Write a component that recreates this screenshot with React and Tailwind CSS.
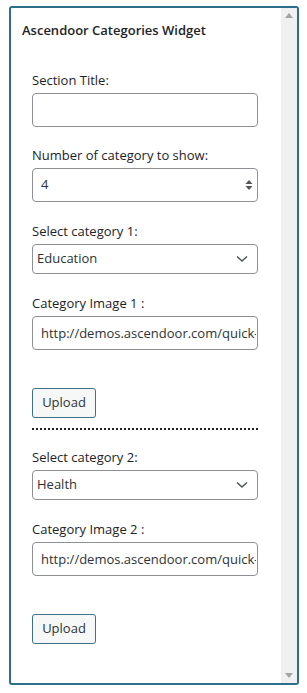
import React from 'react';

const font = { fontFamily: '"Open Sans", "Noto Sans", "Liberation Sans", sans-serif' };

function Label({ children }) {
  return <label className="block text-[13px] leading-[18px] text-[#1d2327] mb-[4px]">{children}</label>;
}

function TextInput({ value = '' }) {
  return (
    <input
      type="text"
      readOnly
      value={value}
      className="block h-[34px] w-[226px] border border-[#8c8f94] rounded-[4px] bg-white pl-[8px] pr-[1px] text-[13px] text-[#2c3338] outline-none"
    />
  );
}

function NumberInput({ value }) {
  return (
    <div className="h-[34px] w-[226px] border border-[#8c8f94] rounded-[4px] bg-white pl-[8px] pr-[4px] flex items-center justify-between">
      <span className="text-[13px] text-[#2c3338]">{value}</span>
      <svg width="8" height="12" viewBox="0 0 8 12">
        <path d="M4 1 L7.5 5 H0.5 Z" fill="#555" />
        <path d="M4 11 L7.5 7 H0.5 Z" fill="#555" />
      </svg>
    </div>
  );
}

function SelectBox({ value }) {
  return (
    <div className="h-[30px] w-[226px] border border-[#8c8f94] rounded-[4px] bg-white pl-[4px] pr-[9px] flex items-center justify-between">
      <span className="text-[13px] text-[#2c3338]">{value}</span>
      <svg width="12" height="8" viewBox="0 0 12 8">
        <path d="M1 1.5 L6 6 L11 1.5" fill="none" stroke="#50575e" strokeWidth="1.6" />
      </svg>
    </div>
  );
}

function UploadButton() {
  return (
    <button className="h-[30px] w-[64px] border border-[#3d6f86] rounded-[3px] bg-[#f6f7f7] text-[13px] text-[#2c3338]">
      Upload
    </button>
  );
}

function CategoryBlock({ index, category, url, first = 'mt-[20px]' }) {
  return (
    <>
      <div className={first}>
        <Label>Select category {index}:</Label>
        <SelectBox value={category} />
      </div>
      <div className="mt-[20px]">
        <Label>Category Image {index} :</Label>
        <TextInput value={url} />
      </div>
      <div className="mt-[38px]">
        <UploadButton />
      </div>
    </>
  );
}

export default function App() {
  return (
    <div className="w-[307px] h-[693px] bg-white pt-[6px] pl-[9px]" style={font}>
      <div className="w-[290px] h-[679px] border-2 border-[#2b6f8b] rounded-[3px] flex overflow-hidden">
        <div className="flex-1 pt-[13px] overflow-hidden">
          <h2 className="pl-[11px] text-[13px] leading-[18px] font-semibold text-[#1d2327]">
            Ascendoor Categories Widget
          </h2>
          <div className="pl-[21px] pt-[32px]">
            <div>
              <Label>Section Title:</Label>
              <TextInput />
            </div>
            <div className="mt-[19px]">
              <Label>Number of category to show:</Label>
              <NumberInput value="4" />
            </div>
            <CategoryBlock index={1} category="Education" url="http://demos.ascendoor.com/quick-news/wp" />
            <div className="mt-[10px] w-[226px] border-b-2 border-dotted border-[#222]" />
            <CategoryBlock index={2} category="Health" url="http://demos.ascendoor.com/quick-news/wp" first="mt-[18px]" />
          </div>
        </div>
        <div className="w-[16px] bg-[#f0f0f0] flex flex-col items-center justify-between py-[5px]">
          <svg width="8" height="5" viewBox="0 0 8 5">
            <path d="M4 0 L8 5 H0 Z" fill="#a3a3a3" />
          </svg>
          <svg width="8" height="5" viewBox="0 0 8 5">
            <path d="M4 5 L8 0 H0 Z" fill="#a3a3a3" />
          </svg>
        </div>
      </div>
    </div>
  );
}
